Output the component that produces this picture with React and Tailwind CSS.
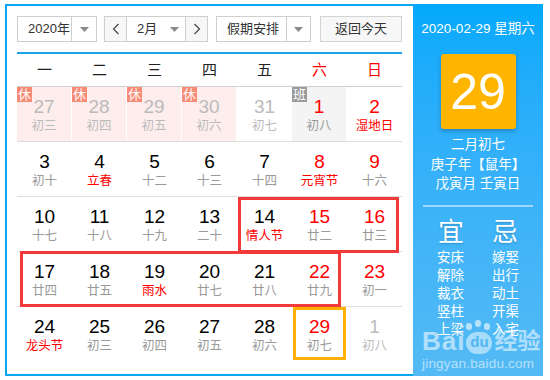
import React from "react";

const F = "font-['Liberation_Sans','Noto_Sans_CJK_SC',sans-serif]";

const rows = [
  [
    { n: "27", l: "初三", type: "prev", rest: true },
    { n: "28", l: "初四", type: "prev", rest: true },
    { n: "29", l: "初五", type: "prev", rest: true },
    { n: "30", l: "初六", type: "prev", rest: true },
    { n: "31", l: "初七", type: "prev" },
    { n: "1", l: "初八", type: "red", work: true },
    { n: "2", l: "湿地日", type: "red", fest: true },
  ],
  [
    { n: "3", l: "初十" },
    { n: "4", l: "立春", fest: true },
    { n: "5", l: "十二" },
    { n: "6", l: "十三" },
    { n: "7", l: "十四" },
    { n: "8", l: "元宵节", type: "red", fest: true },
    { n: "9", l: "十六", type: "red" },
  ],
  [
    { n: "10", l: "十七" },
    { n: "11", l: "十八" },
    { n: "12", l: "十九" },
    { n: "13", l: "二十" },
    { n: "14", l: "情人节", fest: true },
    { n: "15", l: "廿二", type: "red" },
    { n: "16", l: "廿三", type: "red" },
  ],
  [
    { n: "17", l: "廿四" },
    { n: "18", l: "廿五" },
    { n: "19", l: "雨水", fest: true },
    { n: "20", l: "廿七" },
    { n: "21", l: "廿八" },
    { n: "22", l: "廿九", type: "red" },
    { n: "23", l: "初一", type: "red" },
  ],
  [
    { n: "24", l: "龙头节", fest: true },
    { n: "25", l: "初三" },
    { n: "26", l: "初四" },
    { n: "27", l: "初五" },
    { n: "28", l: "初六" },
    { n: "29", l: "初七", type: "red" },
    { n: "1", l: "初八", type: "next" },
  ],
];

function Tri() {
  return (
    <svg width="9" height="5" viewBox="0 0 9 5">
      <path d="M0 0 L9 0 L4.5 5 Z" fill="#8a8a8a" />
    </svg>
  );
}

function Chev({ dir }) {
  return (
    <svg width="8" height="12" viewBox="0 0 8 12">
      <path
        d={dir === "l" ? "M6.5 1 L1.5 6 L6.5 11" : "M1.5 1 L6.5 6 L1.5 11"}
        fill="none"
        stroke="#444"
        strokeWidth="1.2"
      />
    </svg>
  );
}

function Cell({ c }) {
  let numColor = "text-black";
  let lunColor = "text-[#999]";
  if (c.type === "prev" || c.type === "next") {
    numColor = "text-[#bbb]";
    lunColor = "text-[#bbb]";
  } else if (c.type === "red") {
    numColor = "text-[#f00]";
  }
  if (c.fest) lunColor = "text-[#f00]";
  const bg = c.rest ? "bg-[#fdeeed] border-r border-white" : c.work ? "bg-[#f4f4f4] border-r border-white" : "";
  return (
    <div className={`relative flex flex-col items-center pt-[9px] h-full ${bg}`}>
      {c.rest && (
        <div className="absolute left-0 top-0 w-[15px] h-[15px] bg-[#f88b76] text-white text-[13px] leading-[15px] text-center">
          休
        </div>
      )}
      {c.work && (
        <div className="absolute left-0 top-0 w-[15px] h-[15px] bg-[#9a9a9a] text-white text-[13px] leading-[15px] text-center">
          班
        </div>
      )}
      <div className={`text-[19px] leading-[22px] ${numColor}`}>{c.n}</div>
      <div className={`text-[12.5px] leading-[16px] ${lunColor}`}>{c.l}</div>
    </div>
  );
}

export default function App() {
  return (
    <div className={`relative w-[550px] h-[380px] bg-white ${F}`}>
      <div className="absolute left-[5px] top-[4px] flex">
        {/* Left calendar */}
        <div className="w-[408px] h-[372px] border-l-2 border-t-2 border-b-2 border-[#0aa6f0] pl-[10px] pr-[11px] pt-[10px]">
          {/* toolbar */}
          <div className="flex h-[26px] text-[13px] text-[#333] whitespace-nowrap">
            <div className="flex w-[80px] border border-[#cfcfcf] bg-white">
              <div className="flex-1 flex items-center pl-[10px]">2020年</div>
              <div className="w-[25px] border-l border-[#cfcfcf] flex items-center justify-center">
                <Tri />
              </div>
            </div>
            <div className="ml-[7px] flex w-[104px] border border-[#cfcfcf]">
              <div className="w-[22px] bg-[#f7f7f7] border-r border-[#cfcfcf] flex items-center justify-center">
                <Chev dir="l" />
              </div>
              <div className="flex-1 flex items-center justify-between pl-[10px] pr-[6px] bg-white">
                <span>2月</span>
                <Tri />
              </div>
              <div className="w-[22px] bg-[#f7f7f7] border-l border-[#cfcfcf] flex items-center justify-center">
                <Chev dir="r" />
              </div>
            </div>
            <div className="ml-[8px] flex w-[95px] border border-[#cfcfcf] bg-white">
              <div className="flex-1 flex items-center pl-[10px]">假期安排</div>
              <div className="w-[24px] border-l border-[#cfcfcf] flex items-center justify-center">
                <Tri />
              </div>
            </div>
            <div className="ml-[9px] w-[82px] border border-[#d4d4d4] bg-[#f7f7f7] flex items-center justify-center">
              返回今天
            </div>
          </div>
          <div className="mt-[10px] h-[2px] bg-[#1aa3e8]" />
          {/* weekday header */}
          <div className="grid grid-cols-7 h-[33px] border-b border-[#d0d0d0] text-[15px] items-center">
            {["一", "二", "三", "四", "五", "六", "日"].map((d, i) => (
              <div key={i} className={`text-center ${i >= 5 ? "text-[#f00]" : "text-[#222]"}`}>
                {d}
              </div>
            ))}
          </div>
          {rows.map((r, ri) => (
            <div
              key={ri}
              className={`grid grid-cols-7 h-[55px] ${ri < 4 ? "border-b border-[#ddd]" : ""}`}
            >
              {r.map((c, ci) => (
                <Cell key={ci} c={c} />
              ))}
            </div>
          ))}
        </div>
        {/* Right panel */}
        <div className="relative w-[130px] h-[372px] bg-gradient-to-b from-[#00a9fc] to-[#54baf5] text-white flex flex-col items-center">
          <div className="mt-[16px] text-[13.5px] leading-[18px]">2020-02-29 星期六</div>
          <div className="mt-[16px] w-[75px] h-[75px] bg-[#ffb400] rounded-[3px] shadow-[0_2px_4px_rgba(0,0,0,0.25)] flex items-center justify-center text-[50px] leading-none">
            29
          </div>
          <div className="mt-[6px] text-[13.5px] leading-[19.5px] text-center">
            <div>二月初七</div>
            <div>庚子年【鼠年】</div>
            <div>戊寅月 壬寅日</div>
          </div>
          <div className="mt-[11px] w-[110px] h-[2px] bg-white/50" />
          <div className="mt-[10px] flex w-[110px] justify-between px-[15px] text-[26px] leading-[30px] [text-shadow:0_1px_2px_rgba(0,0,0,0.2)]">
            <span>宜</span>
            <span>忌</span>
          </div>
          <div className="mt-[2px] flex w-[110px] justify-between px-[14px] text-[13.5px] leading-[18px]">
            <div className="flex flex-col">
              <span>安床</span>
              <span>解除</span>
              <span>裁衣</span>
              <span>竖柱</span>
              <span>上梁</span>
            </div>
            <div className="flex flex-col">
              <span>嫁娶</span>
              <span>出行</span>
              <span>动土</span>
              <span>开渠</span>
              <span>入宅</span>
            </div>
          </div>
          {/* watermark */}
          <div className="absolute left-[9px] top-[322px] text-white/55 pointer-events-none">
            <div className="flex items-end h-[28px]">
              <span className="text-[26px] font-bold leading-[26px] tracking-[1px]">Bai</span>
              <span className="relative ml-[1px] w-[26px] h-[22px] rounded-[11px] bg-white/50 text-[#4fb6f2] text-[15px] font-bold leading-[20px] text-center">
                du
                <span className="absolute left-[0px] top-[-9px] w-[6px] h-[7px] rounded-full bg-white/60" />
                <span className="absolute left-[9px] top-[-12px] w-[6px] h-[7px] rounded-full bg-white/60" />
                <span className="absolute left-[18px] top-[-9px] w-[6px] h-[7px] rounded-full bg-white/60" />
              </span>
              <span className="ml-[2px] text-[23px] font-bold leading-[26px]">经验</span>
            </div>
            <div className="mt-[2px] text-[13.5px] leading-[16px] tracking-[0.2px]">jingyan.baidu.com</div>
          </div>
        </div>
      </div>
      {/* annotation boxes */}
      <div className="absolute left-[238px] top-[197px] w-[161px] h-[56px] border-[3px] border-[#f23a3a]" />
      <div className="absolute left-[20px] top-[251px] w-[321px] h-[56px] border-[3px] border-[#f23a3a]" />
      <div className="absolute left-[293px] top-[307px] w-[53px] h-[53px] border-[3px] border-[#ffb000]" />
    </div>
  );
}
